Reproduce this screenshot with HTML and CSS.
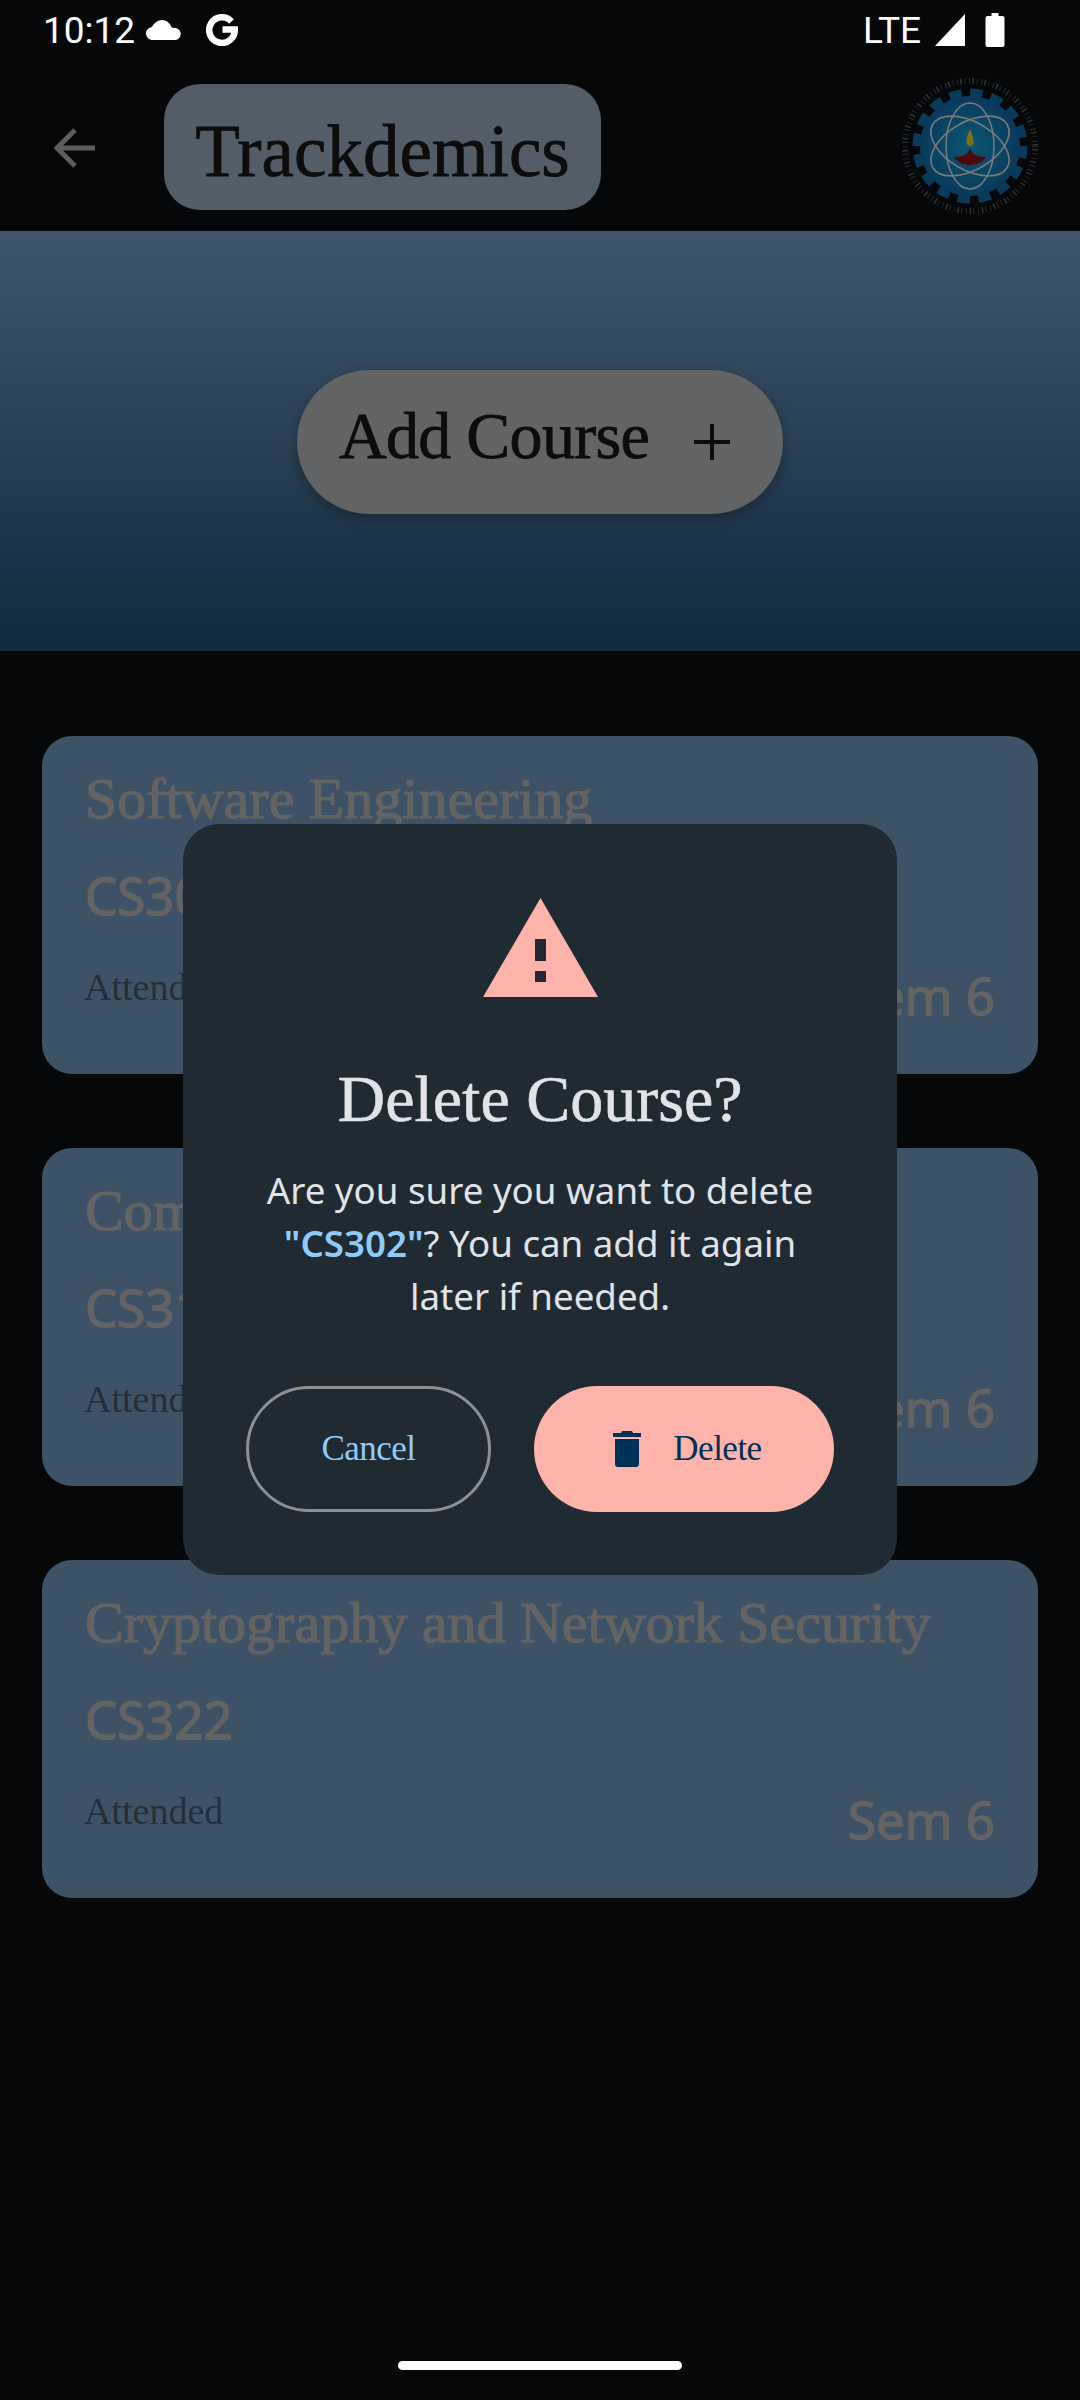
FILE: index.html
```html
<!DOCTYPE html>
<html>
<head>
    <meta charset="UTF-8">
    <title>Trackdemics</title>
    <link rel="stylesheet" href="styles.css">
</head>
<body>

<div class="status-bar">
    <div class="status-left">
        <span class="clock">10:12</span>
        <svg class="cloud" viewBox="0 0 36 20"><path d="M7 20a6.500 6.500 0 0 1-1-13C8 3 12 0 16 0c4 0 7 2 9 6 .5 1 1 1.500 2 2a6 6 0 0 1 3 12z" fill="#fff"/></svg>
        <svg class="google" viewBox="0 0 32 32"><path d="M25.500 7.500A12.800 12.800 0 1 0 28.800 15.500H16.500" fill="none" stroke="#fff" stroke-width="6.500"/></svg>
    </div>
    <div class="status-right">
        <span class="lte">LTE</span>
        <svg class="signal" viewBox="0 0 30 32"><polygon points="30,0 30,32 0,32" fill="#fff"/></svg>
        <svg class="battery" viewBox="0 0 19 34"><path d="M6 0h7v3h4a2 2 0 0 1 2 2v27a2 2 0 0 1-2 2H2a2 2 0 0 1-2-2V5a2 2 0 0 1 2-2h4z" fill="#fff"/></svg>
    </div>
</div>

<div class="toolbar">
    <svg class="back" viewBox="0 0 42 42"><path d="M41 21H4M21 3 3 21l18 18" fill="none" stroke="#5c5c5c" stroke-width="5"/></svg>
    <div class="app-title">Trackdemics</div>
    <svg class="logo" viewBox="0 0 140 140">
        <defs>
            <radialGradient id="gearFill">
                <stop offset="0" stop-color="#0b5670"/>
                <stop offset="1" stop-color="#093a5c"/>
            </radialGradient>
        </defs>
        <circle cx="70" cy="70" r="65" fill="none" stroke="#333537" stroke-width="6" stroke-dasharray="0.800 2.400 1.400 3 0.600 4"/>
        <circle cx="70" cy="70" r="50" fill="url(#gearFill)"/>
        <circle cx="70" cy="70" r="52" fill="none" stroke="#093a5c" stroke-width="11" stroke-dasharray="12 8.400"/>
        <g fill="none" stroke="#77797a" stroke-width="1.600">
            <ellipse cx="70" cy="70" rx="24" ry="43"/>
            <ellipse cx="70" cy="70" rx="24" ry="43" transform="rotate(60 70 70)"/>
            <ellipse cx="70" cy="70" rx="24" ry="43" transform="rotate(120 70 70)"/>
        </g>
        <path d="M70 53c3 6 3.500 11 3.500 13 0 3-2 4-3.500 4s-3.500-1-3.500-4c0-2 .5-7 3.500-13z" fill="#7d7015"/>
        <path d="M54 81c8 0 14-2 16-9 2 7 8 9 16 9-4 6-10 8-16 8s-12-2-16-8z" fill="#4d0808"/>
    </svg>
</div>

<div class="hero">
    <div class="add-course">
        <span class="add-label">Add Course</span>
        <svg class="plus" viewBox="0 0 38 38"><path d="M19 1v36M1 19h36" stroke="#0c0c0c" stroke-width="4"/></svg>
    </div>
</div>

<div class="course-list">
    <div class="course-card">
        <div class="course-name">Software Engineering</div>
        <div class="course-code">CS302</div>
        <div class="course-foot">
            <span class="attended">Attended</span>
            <span class="sem">Sem 6</span>
        </div>
    </div>
    <div class="course-card">
        <div class="course-name">Compiler Design</div>
        <div class="course-code">CS310</div>
        <div class="course-foot">
            <span class="attended">Attended</span>
            <span class="sem">Sem 6</span>
        </div>
    </div>
    <div class="course-card">
        <div class="course-name">Cryptography and Network Security</div>
        <div class="course-code">CS322</div>
        <div class="course-foot">
            <span class="attended">Attended</span>
            <span class="sem">Sem 6</span>
        </div>
    </div>
</div>

<div class="dialog">
    <svg class="warn" viewBox="0 0 115 99">
        <path d="M57.500 0 115 99H0z" fill="#ffb4ab"/>
        <path d="M52 41h11v22H52zM52 73h11v11H52z" fill="#1f2a33"/>
    </svg>
    <h2 class="dialog-title">Delete Course?</h2>
    <p class="dialog-text">Are you sure you want to delete <b>"CS302"</b>? You can add it again later if needed.</p>
    <div class="dialog-actions">
        <div class="btn btn-cancel">Cancel</div>
        <div class="btn btn-delete">
            <svg class="trash" viewBox="0 0 28 36"><path d="M9 0h10l1 2h8v4H0V2h8zM2 8h24v25a3 3 0 0 1-3 3H5a3 3 0 0 1-3-3z" fill="#003258"/></svg>
            Delete
        </div>
    </div>
</div>

<div class="home-bar"></div>

</body>
</html>
```

FILE: styles.css
```css
body {
    margin: 0;
    width: 1080px;
    height: 2400px;
    position: relative;
    overflow: hidden;
    background-color: #050709;
    font-family: "Noto Sans", sans-serif;
}
.status-bar {
    height: 60px;
    padding: 0 75px 0 43px;
    display: flex;
    justify-content: space-between;
    align-items: center;
    color: #fff;
    font-family: Roboto, sans-serif;
    font-size: 37px;
}
.status-left, .status-right {
    display: flex;
    align-items: center;
}
.cloud {
    width: 36px;
    height: 20px;
    margin-left: 11px;
}
.google {
    width: 32px;
    height: 32px;
    margin-left: 24px;
}
.signal {
    width: 32px;
    height: 32px;
    margin-left: 13px;
}
.battery {
    width: 20px;
    height: 34px;
    margin-left: 19px;
}
.toolbar {
    height: 171px;
    padding: 0 40px 0 54px;
    box-sizing: border-box;
    display: flex;
    align-items: center;
}
.back {
    width: 42px;
    height: 42px;
    margin-top: 4px;
}
.app-title {
    margin-left: 68px;
    margin-top: 3px;
    width: 437px;
    height: 126px;
    line-height: 136px;
    text-align: center;
    background-color: #535d67;
    border-radius: 36px;
    color: #0c0c0c;
    font-family: "Liberation Serif", serif;
    font-size: 73px;
    -webkit-text-stroke: 0.8px #0c0c0c;
}
.logo {
    width: 140px;
    height: 140px;
    margin-left: auto;
}
.hero {
    height: 420px;
    display: flex;
    justify-content: center;
    align-items: center;
    background: linear-gradient(#40566d, #12283b);
}
.add-course {
    width: 486px;
    height: 144px;
    margin-top: 2px;
    padding-right: 10px;
    box-sizing: border-box;
    display: flex;
    justify-content: center;
    align-items: center;
    gap: 44px;
    background-color: #626365;
    border-radius: 72px;
    box-shadow: 0 4px 12px rgba(0, 0, 0, 0.25);
    color: #0c0c0c;
    font-family: "Liberation Serif", serif;
    font-size: 66px;
}
.add-label {
    margin-bottom: 12px;
    letter-spacing: -0.7px;
    -webkit-text-stroke: 0.8px #0c0c0c;
}
.plus {
    width: 38px;
    height: 38px;
}
.course-list {
    padding: 85px 42px 0;
    display: flex;
    flex-direction: column;
    gap: 74px;
}
.course-card {
    height: 338px;
    box-sizing: border-box;
    padding: 28px 43px 0;
    background-color: #3e5267;
    border-radius: 30px;
    color: #636363;
}
.course-name {
    font-family: "Liberation Serif", serif;
    font-size: 58px;
    line-height: 70px;
    -webkit-text-stroke: 1.2px #636363;
}
.course-code {
    margin-top: 27px;
    font-size: 51px;
    line-height: 68px;
    -webkit-text-stroke: 1.4px #636363;
}
.course-foot {
    margin-top: 34px;
    display: flex;
    justify-content: space-between;
    align-items: flex-start;
}
.attended {
    margin-left: -1px;
    font-family: "Liberation Serif", serif;
    font-size: 38px;
    line-height: 48px;
    color: #252e38;
}
.sem {
    margin-top: -2px;
    font-size: 51px;
    line-height: 68px;
    -webkit-text-stroke: 1.4px #636363;
}
.dialog {
    position: absolute;
    left: 183px;
    top: 824px;
    width: 714px;
    height: 751px;
    box-sizing: border-box;
    padding-top: 74px;
    display: flex;
    flex-direction: column;
    align-items: center;
    background-color: #1f2a33;
    border-radius: 36px;
}
.warn {
    width: 115px;
    height: 99px;
}
.dialog-title {
    margin: 62px 0 0;
    font-family: "Liberation Serif", serif;
    font-size: 66px;
    font-weight: normal;
    line-height: 80px;
    color: #e0e3e8;
    -webkit-text-stroke: 0.6px #e0e3e8;
}
.dialog-text {
    margin: 25px 0 0;
    width: 590px;
    text-align: center;
    font-size: 36.700px;
    line-height: 53px;
    color: #e0e3e8;
}
.dialog-text b {
    font-weight: 600;
    color: #90caf9;
}
.dialog-actions {
    margin-top: 63px;
    display: flex;
    gap: 43px;
}
.btn {
    height: 126px;
    box-sizing: border-box;
    display: flex;
    justify-content: center;
    align-items: center;
    border-radius: 63px;
    font-family: "Liberation Serif", serif;
    font-size: 35px;
    letter-spacing: -0.5px;
}
.btn-cancel {
    width: 245px;
    border: 3px solid #8e9194;
    color: #90caf9;
}
.btn-delete {
    width: 300px;
    padding-left: 7px;
    gap: 32px;
    background-color: #ffb4ab;
    color: #003258;
}
.trash {
    width: 28px;
    height: 36px;
}
.home-bar {
    position: absolute;
    left: 398px;
    top: 2361px;
    width: 284px;
    height: 9px;
    border-radius: 5px;
    background-color: #fff;
}
```
